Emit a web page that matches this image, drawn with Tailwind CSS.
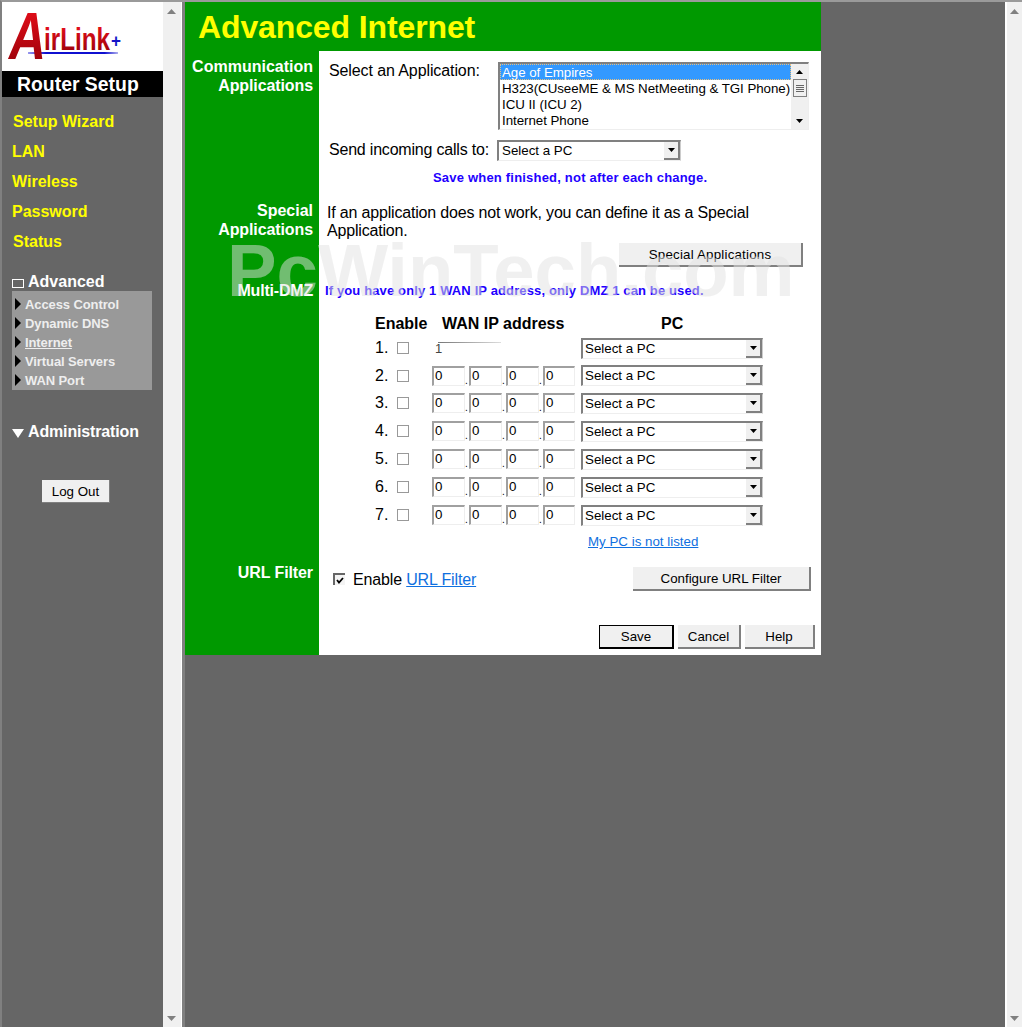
<!DOCTYPE html>
<html>
<head>
<meta charset="utf-8">
<script src="https://cdn.jsdelivr.net/npm/@tailwindcss/browser@4"></script>
</head>
<body class="bg-[#666666] font-['Liberation_Sans',Arial,sans-serif] text-black">
<div class="flex h-[1027px] w-[1022px] overflow-hidden border-t-2 border-l-2 border-t-[#9a9a9a] border-l-[#808080]">

  <!-- left frame -->
  <aside class="flex w-[161px] shrink-0 flex-col bg-[#666666]">
    <div class="h-[69px] bg-white">
      <svg class="overflow-visible" width="161" height="69" viewBox="0 0 161 69">
        <defs>
          <linearGradient id="red" x1="0" y1="0" x2="0" y2="1"><stop offset="0" stop-color="#f0101c"/><stop offset="1" stop-color="#900008"/></linearGradient>
          <linearGradient id="line" x1="0" y1="0" x2="1" y2="0"><stop offset="0" stop-color="#9a9aee"/><stop offset=".2" stop-color="#1010d0"/><stop offset=".85" stop-color="#1010d0"/><stop offset="1" stop-color="#b0b0ee"/></linearGradient>
        </defs>
        <rect x="26" y="50" width="90" height="2" fill="url(#line)"/>
        <text x="7" y="57" font-family="Liberation Sans" font-weight="700" font-style="italic" font-size="66" fill="url(#red)" textLength="37" lengthAdjust="spacingAndGlyphs">A</text>
        <text x="42" y="48" font-family="Liberation Sans" font-weight="700" font-size="31" fill="url(#red)" textLength="66" lengthAdjust="spacingAndGlyphs">irLink</text>
        <text x="109" y="45" font-family="Liberation Sans" font-weight="700" font-size="18" fill="#1414c8" textLength="10" lengthAdjust="spacingAndGlyphs">+</text>
      </svg>
    </div>
    <div class="flex h-[26px] items-center bg-black pt-[1px] pl-[15px] text-[19.4px] leading-none font-bold text-white">Router Setup</div>

    <nav class="mt-[10px] flex flex-col text-[16px] font-bold text-[#ffff00]">
      <div class="flex h-[30px] items-center pl-[11px]">Setup Wizard</div>
      <div class="flex h-[30px] items-center pl-[10px]">LAN</div>
      <div class="flex h-[30px] items-center pl-[10px]">Wireless</div>
      <div class="flex h-[30px] items-center pl-[10px]">Password</div>
      <div class="flex h-[30px] items-center pl-[11px]">Status</div>
    </nav>

    <div class="mt-[15px] flex h-[19px] items-center pl-[10px] text-[16px] font-bold text-white">
      <span class="mr-[4px] mt-[3px] h-[9px] w-[12px] border border-white"></span>Advanced
    </div>
    <div class="ml-[10px] flex h-[99px] w-[140px] flex-col bg-[#999999] pt-[4px] text-[13px] font-bold tracking-[-.1px] text-[#eeeeee]">
      <div class="flex h-[19px] items-center"><svg class="mx-[3px] mb-[2px]" width="6" height="12" viewBox="0 0 6 12"><path d="M0 0L6 6L0 12Z" fill="#000"/></svg><span class="ml-[1px]">Access Control</span></div>
      <div class="flex h-[19px] items-center"><svg class="mx-[3px] mb-[2px]" width="6" height="12" viewBox="0 0 6 12"><path d="M0 0L6 6L0 12Z" fill="#000"/></svg><span class="ml-[1px]">Dynamic DNS</span></div>
      <div class="flex h-[19px] items-center"><svg class="mx-[3px] mb-[2px]" width="6" height="12" viewBox="0 0 6 12"><path d="M0 0L6 6L0 12Z" fill="#000"/></svg><span class="ml-[1px] underline">Internet</span></div>
      <div class="flex h-[19px] items-center"><svg class="mx-[3px] mb-[2px]" width="6" height="12" viewBox="0 0 6 12"><path d="M0 0L6 6L0 12Z" fill="#000"/></svg><span class="ml-[1px]">Virtual Servers</span></div>
      <div class="flex h-[19px] items-center"><svg class="mx-[3px] mb-[2px]" width="6" height="12" viewBox="0 0 6 12"><path d="M0 0L6 6L0 12Z" fill="#000"/></svg><span class="ml-[1px]">WAN Port</span></div>
    </div>

    <div class="mt-[32px] flex h-[20px] items-center pl-[10px] text-[16px] font-bold tracking-[-.15px] text-white">
      <svg class="mr-[4px] mt-[2px]" width="12" height="9" viewBox="0 0 12 9"><path d="M0 0H12L6 9Z" fill="#fff"/></svg>Administration
    </div>
    <div class="ml-[40px] mt-[38px] flex h-[23px] w-[68px] items-center justify-center border-r border-b border-[#808080] bg-[#f0f0f0] pt-[1px] text-[13.33px]">Log Out</div>
  </aside>

  <!-- left scrollbar -->
  <div class="relative w-[18px] shrink-0 bg-[#f0f0f0]">
    <svg class="absolute top-[7px] left-[4px]" width="9" height="5" viewBox="0 0 9 5"><path d="M4.5 0L9 5H0Z" fill="#808080"/></svg>
    <svg class="absolute top-[1014px] left-[4px]" width="9" height="5" viewBox="0 0 9 5"><path d="M0 0H9L4.5 5Z" fill="#808080"/></svg>
  </div>
  <div class="w-[1px] shrink-0 bg-white"></div>
  <div class="w-[3px] shrink-0 bg-[#808080]"></div>

  <!-- main frame -->
  <main class="relative w-[820px] shrink-0 bg-[#666666]">
    <div class="w-[636px]">
      <h1 class="flex h-[49px] items-center bg-[#009900] pl-[13px] text-[32px] font-bold tracking-[-.12px] text-[#ffff00]">Advanced Internet</h1>

      <!-- Communication -->
      <section class="grid h-[149px] grid-cols-[134px_502px]">
        <div class="bg-[#009900] pt-[6px] pr-[6px] text-right text-[16px] leading-[19px] font-bold text-white">Communication<br><span class="tracking-[-.1px]">Applications</span></div>
        <div class="bg-white pt-[11px]">
          <div class="flex">
            <div class="ml-[10px] w-[169px] text-[16px] leading-[18px] tracking-[-.1px]">Select an Application:</div>
            <div class="flex h-[68px] w-[311px] border-t-2 border-l-2 border-r border-b border-t-[#808080] border-l-[#808080] border-r-[#eeeeee] border-b-[#eeeeee] text-[13.33px] leading-[18px] tracking-[-.05px]">
              <div class="w-[291px]">
                <div class="h-[16px] bg-[#3399ff] pl-[2px] text-white outline-1 -outline-offset-1 outline-[#e8c080] outline-dotted">Age of Empires</div>
                <div class="h-[16px] pl-[2px] whitespace-nowrap">H323(CUseeME &amp; MS NetMeeting &amp; TGI Phone)</div>
                <div class="h-[16px] pl-[2px]">ICU II (ICU 2)</div>
                <div class="h-[16px] pl-[2px]">Internet Phone</div>
              </div>
              <div class="flex w-[17px] flex-col items-center bg-[#f0f0f0] pt-[6px]">
                <svg width="7" height="4" viewBox="0 0 7 4"><path d="M3.5 0L7 4H0Z" fill="#000"/></svg>
                <div class="mt-[5px] flex h-[18px] w-[14px] flex-col items-center justify-center gap-[1px] border border-[#808080] bg-[#f0f0f0]"><i class="h-[1px] w-[8px] bg-[#666]"></i><i class="h-[1px] w-[8px] bg-[#666]"></i><i class="h-[1px] w-[8px] bg-[#666]"></i><i class="h-[1px] w-[8px] bg-[#666]"></i></div>
                <svg class="mt-[22px]" width="7" height="4" viewBox="0 0 7 4"><path d="M0 0H7L3.5 4Z" fill="#000"/></svg>
              </div>
            </div>
          </div>
          <div class="mt-[8px] flex items-center">
            <div class="ml-[10px] w-[168px] text-[16px] tracking-[-.2px]">Send incoming calls to:</div>
            <div class="flex h-[21px] w-[184px] border-t-2 border-l-2 border-r border-b border-t-[#808080] border-l-[#808080] border-r-[#cccccc] border-b-[#eeeeee] text-[13.33px]">
              <span class="flex-1 pl-[3px] leading-[17px]">Select a PC</span>
              <span class="flex w-[16px] items-center justify-center border-r-2 border-b-2 border-[#808080] bg-[#f0f0f0]"><svg width="7" height="4" viewBox="0 0 7 4"><path d="M0 0H7L3.5 4Z" fill="#000"/></svg></span>
            </div>
          </div>
          <div class="mt-[8px] w-[502px] pl-[114px] text-[13px] leading-[16px] font-bold tracking-[.2px] text-[#2200ff]">Save when finished, not after each change.</div>
        </div>
      </section>

      <!-- Special -->
      <section class="grid h-[81px] grid-cols-[134px_502px]">
        <div class="bg-[#009900] pt-[1px] pr-[6px] text-right text-[16px] leading-[19px] font-bold text-white">Special<br><span class="tracking-[-.1px]">Applications</span></div>
        <div class="bg-white pt-[4px] pl-[8px] text-[16px] leading-[18px] tracking-[-.18px]">
          <p class="w-[440px]">If an application does not work, you can define it as a Special Application.</p>
          <div class="mt-[3px] ml-[292px] flex h-[24px] w-[184px] items-center justify-center border-r-2 border-b-2 border-[#808080] bg-[#f0f0f0] pt-[1px] text-[13.33px] tracking-[.2px]">Special Applications</div>
        </div>
      </section>

      <!-- Multi-DMZ -->
      <section class="grid h-[279px] grid-cols-[134px_502px]">
        <div class="bg-[#009900] pr-[6px] text-right text-[16px] leading-[19px] font-bold tracking-[-.2px] text-white">Multi-DMZ</div>
        <div class="bg-white">
          <div class="pl-[6px] text-[13px] leading-[19px] font-bold tracking-[.13px] text-[#2200ff]">If you have only 1 WAN IP address, only DMZ 1 can be used.</div>
          <div class="mt-[14px] flex h-[19px] text-[16px] leading-[19px] font-bold">
            <span class="ml-[56px] w-[67px]">Enable</span>
            <span class="w-[219px]">WAN IP address</span>
            <span>PC</span>
          </div>

          <div class="mt-[1px] flex h-[28px] items-center text-[16px]">
            <span class="ml-[56px] w-[22px]">1.</span>
            <span class="h-[12px] w-[12px] border border-[#999999]"></span>
            <div class="relative ml-[26px] w-[146px] text-[13px] leading-none text-[#444]">1<i class="absolute top-0 left-[3px] h-[1px] w-[63px] bg-gradient-to-r from-[#777] to-[#ddd]"></i></div>
            <div class="flex h-[21px] w-[182px] border-t-2 border-l-2 border-r border-b border-t-[#808080] border-l-[#808080] border-r-[#cccccc] border-b-[#eeeeee] text-[13.33px]"><span class="flex-1 pl-[2px] leading-[17px]">Select a PC</span><span class="flex w-[16px] items-center justify-center border-r-2 border-b-2 border-[#808080] bg-[#f0f0f0]"><svg width="7" height="4" viewBox="0 0 7 4"><path d="M0 0H7L3.5 4Z" fill="#000"/></svg></span></div>
          </div>

          <div class="flex h-[27px] items-center text-[16px]">
            <span class="ml-[56px] w-[22px]">2.</span>
            <span class="h-[12px] w-[12px] border border-[#999999]"></span>
            <div class="ml-[23px] flex w-[149px] items-end text-[13.33px] leading-[16px]"><span class="h-[20px] w-[33px] border-t-2 border-l-2 border-r border-b border-t-[#a0a0a0] border-l-[#a0a0a0] border-r-[#eeeeee] border-b-[#eeeeee] pl-[1px]">0</span><span class="w-[4px] text-[10px] leading-[10px]">.</span><span class="h-[20px] w-[33px] border-t-2 border-l-2 border-r border-b border-t-[#a0a0a0] border-l-[#a0a0a0] border-r-[#eeeeee] border-b-[#eeeeee] pl-[1px]">0</span><span class="w-[4px] text-[10px] leading-[10px]">.</span><span class="h-[20px] w-[33px] border-t-2 border-l-2 border-r border-b border-t-[#a0a0a0] border-l-[#a0a0a0] border-r-[#eeeeee] border-b-[#eeeeee] pl-[1px]">0</span><span class="w-[4px] text-[10px] leading-[10px]">.</span><span class="h-[20px] w-[32px] border-t-2 border-l-2 border-r border-b border-t-[#a0a0a0] border-l-[#a0a0a0] border-r-[#eeeeee] border-b-[#eeeeee] pl-[1px]">0</span></div>
            <div class="flex h-[21px] w-[182px] border-t-2 border-l-2 border-r border-b border-t-[#808080] border-l-[#808080] border-r-[#cccccc] border-b-[#eeeeee] text-[13.33px]"><span class="flex-1 pl-[2px] leading-[17px]">Select a PC</span><span class="flex w-[16px] items-center justify-center border-r-2 border-b-2 border-[#808080] bg-[#f0f0f0]"><svg width="7" height="4" viewBox="0 0 7 4"><path d="M0 0H7L3.5 4Z" fill="#000"/></svg></span></div>
          </div>

          <div class="flex h-[28px] items-center text-[16px]">
            <span class="ml-[56px] w-[22px]">3.</span>
            <span class="h-[12px] w-[12px] border border-[#999999]"></span>
            <div class="ml-[23px] flex w-[149px] items-end text-[13.33px] leading-[16px]"><span class="h-[20px] w-[33px] border-t-2 border-l-2 border-r border-b border-t-[#a0a0a0] border-l-[#a0a0a0] border-r-[#eeeeee] border-b-[#eeeeee] pl-[1px]">0</span><span class="w-[4px] text-[10px] leading-[10px]">.</span><span class="h-[20px] w-[33px] border-t-2 border-l-2 border-r border-b border-t-[#a0a0a0] border-l-[#a0a0a0] border-r-[#eeeeee] border-b-[#eeeeee] pl-[1px]">0</span><span class="w-[4px] text-[10px] leading-[10px]">.</span><span class="h-[20px] w-[33px] border-t-2 border-l-2 border-r border-b border-t-[#a0a0a0] border-l-[#a0a0a0] border-r-[#eeeeee] border-b-[#eeeeee] pl-[1px]">0</span><span class="w-[4px] text-[10px] leading-[10px]">.</span><span class="h-[20px] w-[32px] border-t-2 border-l-2 border-r border-b border-t-[#a0a0a0] border-l-[#a0a0a0] border-r-[#eeeeee] border-b-[#eeeeee] pl-[1px]">0</span></div>
            <div class="flex h-[21px] w-[182px] border-t-2 border-l-2 border-r border-b border-t-[#808080] border-l-[#808080] border-r-[#cccccc] border-b-[#eeeeee] text-[13.33px]"><span class="flex-1 pl-[2px] leading-[17px]">Select a PC</span><span class="flex w-[16px] items-center justify-center border-r-2 border-b-2 border-[#808080] bg-[#f0f0f0]"><svg width="7" height="4" viewBox="0 0 7 4"><path d="M0 0H7L3.5 4Z" fill="#000"/></svg></span></div>
          </div>

          <div class="flex h-[28px] items-center text-[16px]">
            <span class="ml-[56px] w-[22px]">4.</span>
            <span class="h-[12px] w-[12px] border border-[#999999]"></span>
            <div class="ml-[23px] flex w-[149px] items-end text-[13.33px] leading-[16px]"><span class="h-[20px] w-[33px] border-t-2 border-l-2 border-r border-b border-t-[#a0a0a0] border-l-[#a0a0a0] border-r-[#eeeeee] border-b-[#eeeeee] pl-[1px]">0</span><span class="w-[4px] text-[10px] leading-[10px]">.</span><span class="h-[20px] w-[33px] border-t-2 border-l-2 border-r border-b border-t-[#a0a0a0] border-l-[#a0a0a0] border-r-[#eeeeee] border-b-[#eeeeee] pl-[1px]">0</span><span class="w-[4px] text-[10px] leading-[10px]">.</span><span class="h-[20px] w-[33px] border-t-2 border-l-2 border-r border-b border-t-[#a0a0a0] border-l-[#a0a0a0] border-r-[#eeeeee] border-b-[#eeeeee] pl-[1px]">0</span><span class="w-[4px] text-[10px] leading-[10px]">.</span><span class="h-[20px] w-[32px] border-t-2 border-l-2 border-r border-b border-t-[#a0a0a0] border-l-[#a0a0a0] border-r-[#eeeeee] border-b-[#eeeeee] pl-[1px]">0</span></div>
            <div class="flex h-[21px] w-[182px] border-t-2 border-l-2 border-r border-b border-t-[#808080] border-l-[#808080] border-r-[#cccccc] border-b-[#eeeeee] text-[13.33px]"><span class="flex-1 pl-[2px] leading-[17px]">Select a PC</span><span class="flex w-[16px] items-center justify-center border-r-2 border-b-2 border-[#808080] bg-[#f0f0f0]"><svg width="7" height="4" viewBox="0 0 7 4"><path d="M0 0H7L3.5 4Z" fill="#000"/></svg></span></div>
          </div>

          <div class="flex h-[28px] items-center text-[16px]">
            <span class="ml-[56px] w-[22px]">5.</span>
            <span class="h-[12px] w-[12px] border border-[#999999]"></span>
            <div class="ml-[23px] flex w-[149px] items-end text-[13.33px] leading-[16px]"><span class="h-[20px] w-[33px] border-t-2 border-l-2 border-r border-b border-t-[#a0a0a0] border-l-[#a0a0a0] border-r-[#eeeeee] border-b-[#eeeeee] pl-[1px]">0</span><span class="w-[4px] text-[10px] leading-[10px]">.</span><span class="h-[20px] w-[33px] border-t-2 border-l-2 border-r border-b border-t-[#a0a0a0] border-l-[#a0a0a0] border-r-[#eeeeee] border-b-[#eeeeee] pl-[1px]">0</span><span class="w-[4px] text-[10px] leading-[10px]">.</span><span class="h-[20px] w-[33px] border-t-2 border-l-2 border-r border-b border-t-[#a0a0a0] border-l-[#a0a0a0] border-r-[#eeeeee] border-b-[#eeeeee] pl-[1px]">0</span><span class="w-[4px] text-[10px] leading-[10px]">.</span><span class="h-[20px] w-[32px] border-t-2 border-l-2 border-r border-b border-t-[#a0a0a0] border-l-[#a0a0a0] border-r-[#eeeeee] border-b-[#eeeeee] pl-[1px]">0</span></div>
            <div class="flex h-[21px] w-[182px] border-t-2 border-l-2 border-r border-b border-t-[#808080] border-l-[#808080] border-r-[#cccccc] border-b-[#eeeeee] text-[13.33px]"><span class="flex-1 pl-[2px] leading-[17px]">Select a PC</span><span class="flex w-[16px] items-center justify-center border-r-2 border-b-2 border-[#808080] bg-[#f0f0f0]"><svg width="7" height="4" viewBox="0 0 7 4"><path d="M0 0H7L3.5 4Z" fill="#000"/></svg></span></div>
          </div>

          <div class="flex h-[28px] items-center text-[16px]">
            <span class="ml-[56px] w-[22px]">6.</span>
            <span class="h-[12px] w-[12px] border border-[#999999]"></span>
            <div class="ml-[23px] flex w-[149px] items-end text-[13.33px] leading-[16px]"><span class="h-[20px] w-[33px] border-t-2 border-l-2 border-r border-b border-t-[#a0a0a0] border-l-[#a0a0a0] border-r-[#eeeeee] border-b-[#eeeeee] pl-[1px]">0</span><span class="w-[4px] text-[10px] leading-[10px]">.</span><span class="h-[20px] w-[33px] border-t-2 border-l-2 border-r border-b border-t-[#a0a0a0] border-l-[#a0a0a0] border-r-[#eeeeee] border-b-[#eeeeee] pl-[1px]">0</span><span class="w-[4px] text-[10px] leading-[10px]">.</span><span class="h-[20px] w-[33px] border-t-2 border-l-2 border-r border-b border-t-[#a0a0a0] border-l-[#a0a0a0] border-r-[#eeeeee] border-b-[#eeeeee] pl-[1px]">0</span><span class="w-[4px] text-[10px] leading-[10px]">.</span><span class="h-[20px] w-[32px] border-t-2 border-l-2 border-r border-b border-t-[#a0a0a0] border-l-[#a0a0a0] border-r-[#eeeeee] border-b-[#eeeeee] pl-[1px]">0</span></div>
            <div class="flex h-[21px] w-[182px] border-t-2 border-l-2 border-r border-b border-t-[#808080] border-l-[#808080] border-r-[#cccccc] border-b-[#eeeeee] text-[13.33px]"><span class="flex-1 pl-[2px] leading-[17px]">Select a PC</span><span class="flex w-[16px] items-center justify-center border-r-2 border-b-2 border-[#808080] bg-[#f0f0f0]"><svg width="7" height="4" viewBox="0 0 7 4"><path d="M0 0H7L3.5 4Z" fill="#000"/></svg></span></div>
          </div>

          <div class="flex h-[28px] items-center text-[16px]">
            <span class="ml-[56px] w-[22px]">7.</span>
            <span class="h-[12px] w-[12px] border border-[#999999]"></span>
            <div class="ml-[23px] flex w-[149px] items-end text-[13.33px] leading-[16px]"><span class="h-[20px] w-[33px] border-t-2 border-l-2 border-r border-b border-t-[#a0a0a0] border-l-[#a0a0a0] border-r-[#eeeeee] border-b-[#eeeeee] pl-[1px]">0</span><span class="w-[4px] text-[10px] leading-[10px]">.</span><span class="h-[20px] w-[33px] border-t-2 border-l-2 border-r border-b border-t-[#a0a0a0] border-l-[#a0a0a0] border-r-[#eeeeee] border-b-[#eeeeee] pl-[1px]">0</span><span class="w-[4px] text-[10px] leading-[10px]">.</span><span class="h-[20px] w-[33px] border-t-2 border-l-2 border-r border-b border-t-[#a0a0a0] border-l-[#a0a0a0] border-r-[#eeeeee] border-b-[#eeeeee] pl-[1px]">0</span><span class="w-[4px] text-[10px] leading-[10px]">.</span><span class="h-[20px] w-[32px] border-t-2 border-l-2 border-r border-b border-t-[#a0a0a0] border-l-[#a0a0a0] border-r-[#eeeeee] border-b-[#eeeeee] pl-[1px]">0</span></div>
            <div class="flex h-[21px] w-[182px] border-t-2 border-l-2 border-r border-b border-t-[#808080] border-l-[#808080] border-r-[#cccccc] border-b-[#eeeeee] text-[13.33px]"><span class="flex-1 pl-[2px] leading-[17px]">Select a PC</span><span class="flex w-[16px] items-center justify-center border-r-2 border-b-2 border-[#808080] bg-[#f0f0f0]"><svg width="7" height="4" viewBox="0 0 7 4"><path d="M0 0H7L3.5 4Z" fill="#000"/></svg></span></div>
          </div>

          <div class="mt-[5px] ml-[269px] text-[13.33px] leading-[16px] text-[#0f70e0] underline">My PC is not listed</div>
        </div>
      </section>

      <!-- URL Filter -->
      <section class="grid h-[95px] grid-cols-[134px_502px]">
        <div class="bg-[#009900] pt-[3px] pr-[6px] text-right text-[16px] leading-[19px] font-bold tracking-[-.1px] text-white">URL Filter</div>
        <div class="bg-white pt-[7px]">
          <div class="flex h-[24px] items-center">
            <span class="ml-[14px] flex h-[12px] w-[12px] items-center justify-center border-t-2 border-l-2 border-[#666666] bg-[#f4f4f4]"><svg width="8" height="7" viewBox="0 0 8 7"><path d="M1 3L3 5.5L7 1" fill="none" stroke="#000" stroke-width="1.8"/></svg></span>
            <span class="mt-[2px] ml-[8px] w-[280px] text-[16px] tracking-[-.15px]">Enable <span class="text-[#0f70e0] underline">URL Filter</span></span>
            <span class="flex h-[24px] w-[178px] items-center justify-center border-r-2 border-b-2 border-[#808080] bg-[#f0f0f0] pt-[1px] text-[13.33px]">Configure URL Filter</span>
          </div>
          <div class="mt-[34px] flex h-[24px] text-[13.33px]">
            <span class="ml-[280px] flex w-[75px] items-center justify-center border border-r-2 border-b-2 border-black bg-[#f0f0f0]">Save</span>
            <span class="ml-[4px] flex w-[63px] items-center justify-center border-r-2 border-b-2 border-[#808080] bg-[#f0f0f0] pt-[1px]">Cancel</span>
            <span class="ml-[4px] flex w-[70px] items-center justify-center border-r-2 border-b-2 border-[#808080] bg-[#f0f0f0] pt-[1px]">Help</span>
          </div>
        </div>
      </section>
    </div>

    <!-- watermark over content -->
    <div class="pointer-events-none absolute top-[227px] left-[42px] text-[74.3px] leading-[84px] font-bold whitespace-nowrap text-[#e1e1e1]/50">PcWinTech.com</div>
  </main>

  <!-- right scrollbar -->
  <div class="relative w-[17px] shrink-0 border-l-2 border-white bg-[#f0f0f0]">
    <svg class="absolute top-[7px] left-[3px]" width="9" height="5" viewBox="0 0 9 5"><path d="M4.5 0L9 5H0Z" fill="#808080"/></svg>
    <svg class="absolute top-[1014px] left-[3px]" width="9" height="5" viewBox="0 0 9 5"><path d="M0 0H9L4.5 5Z" fill="#808080"/></svg>
  </div>
</div>
</body>
</html>
